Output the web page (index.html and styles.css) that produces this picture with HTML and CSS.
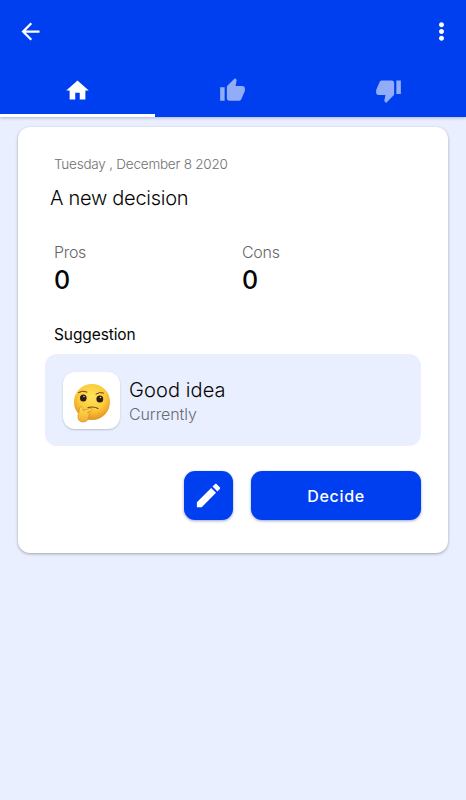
FILE: index.html
```html
<!DOCTYPE html>
<html lang="en">
<head>
<meta charset="utf-8">
<title>Decision</title>
<link rel="stylesheet" href="styles.css">
</head>
<body>
<header class="appbar">
  <div class="toolbar">
    <svg class="icon back" viewBox="0 0 24 24"><path d="M20 11H7.83l5.59-5.59L12 4l-8 8 8 8 1.41-1.41L7.83 13H20v-2z"/></svg>
    <svg class="icon more" viewBox="0 0 24 24"><path d="M12 8.200c1.200 0 2.200-1 2.200-2.200s-1-2.200-2.200-2.200S9.800 4.800 9.800 6s1 2.200 2.200 2.200zm0 1.600c-1.200 0-2.200 1-2.200 2.200s1 2.200 2.200 2.200 2.200-1 2.200-2.200-1-2.200-2.200-2.200zm0 6c-1.200 0-2.200 1-2.200 2.200s1 2.200 2.200 2.200 2.200-1 2.200-2.200-1-2.200-2.200-2.200z"/></svg>
  </div>
  <nav class="tabs">
    <div class="tab active"><svg class="icon" viewBox="0 0 24 24"><path d="M10 20v-6h4v6h5v-8h3L12 3 2 12h3v8z"/></svg></div>
    <div class="tab"><svg class="icon" viewBox="0 0 24 24"><path d="M1 21h4V9H1v12zm22-11c0-1.100-.9-2-2-2h-6.310l.95-4.570.03-.32c0-.41-.17-.79-.44-1.060L14.170 1 7.590 7.590C7.220 7.950 7 8.450 7 9v10c0 1.100.9 2 2 2h9c.83 0 1.540-.5 1.840-1.220l3.020-7.050c.09-.23.14-.47.14-.73v-2z"/></svg></div>
    <div class="tab"><svg class="icon" viewBox="0 0 24 24"><path d="M15 3H6c-.83 0-1.540.5-1.840 1.220l-3.020 7.050c-.09.23-.14.47-.14.73v2c0 1.100.9 2 2 2h6.310l-.95 4.570-.03.32c0 .41.17.79.44 1.060L9.830 23l6.590-6.590c.36-.36.58-.86.58-1.410V5c0-1.100-.9-2-2-2zm4 0v12h4V3h-4z"/></svg></div>
  </nav>
</header>
<main class="card">
  <p class="date">Tuesday , December 8 2020</p>
  <h1 class="title">A new decision</h1>
  <div class="counts">
    <div><p class="label">Pros</p><p class="value">0</p></div>
    <div><p class="label">Cons</p><p class="value">0</p></div>
  </div>
  <h2 class="heading">Suggestion</h2>
  <section class="suggestion">
    <div class="tile">
      <svg class="emoji" viewBox="0 0 38 40">
        <defs>
          <radialGradient id="face" cx=".5" cy=".35" r=".65"><stop offset="0" stop-color="#ffe45c"/><stop offset=".6" stop-color="#fcc93b"/><stop offset="1" stop-color="#e39421"/></radialGradient>
          <linearGradient id="hand" x1="0" y1="0" x2="0" y2="1"><stop offset="0" stop-color="#ffdd55"/><stop offset="1" stop-color="#f2ad30"/></linearGradient>
        </defs>
        <circle cx="19" cy="19" r="18" fill="url(#face)"/>
        <path d="M5.500 9.500q4-2.500 8.500-.5M23 11q3.500-2.500 7.500-1" fill="none" stroke="#65401b" stroke-width="1" stroke-linecap="round"/>
        <ellipse cx="10.300" cy="15" rx="3.300" ry="3.600" fill="#2c1c12"/>
        <ellipse cx="26.800" cy="16" rx="3.400" ry="3.600" fill="#2c1c12"/>
        <circle cx="11" cy="13.500" r=".8" fill="#d8c7ac"/><circle cx="27.500" cy="14.500" r=".8" fill="#d8c7ac"/>
        <path d="M15 24.500q6-1.500 10 1" fill="none" stroke="#744416" stroke-width="1.100" stroke-linecap="round"/>
        <path d="M7.500 24c1.500-.6 2.300.7 2.700 3.500l6.800-2.200c2-.5 2.700 1.500 1 2.400l-3.500 1.800c2.500 0 2.700 1.600 1.300 2.400.8 1 .3 2-.6 2.400.2 2.800-1.700 4.500-4.500 4.600-4 .2-5.800-1.900-5.700-5.700.1-2.500.7-3.200 1-4.800.2-1.400.3-3.900 1.500-4.400z" fill="url(#hand)" stroke="#d48a20" stroke-width=".7"/>
      </svg>
    </div>
    <div>
      <p class="verdict">Good idea</p>
      <p class="status">Currently</p>
    </div>
  </section>
  <div class="actions">
    <button class="edit" aria-label="Edit"><svg viewBox="0 0 24 24"><path d="M3 17.250V21h3.750L17.810 9.940l-3.750-3.750L3 17.250zM20.710 7.040c.39-.39.39-1.020 0-1.410l-2.340-2.340c-.39-.39-1.020-.39-1.410 0l-1.830 1.830 3.750 3.750 1.830-1.830z"/></svg></button>
    <button class="decide">Decide</button>
  </div>
</main>
</body>
</html>
```
FILE: styles.css
```css
* { box-sizing: border-box; margin: 0; }
body {
  min-height: 800px;
  background: #e9effe;
  font-family: Inter, "Liberation Sans", sans-serif;
  font-weight: 300;
  color: #050505;
}
svg { display: block; fill: #fff; }
p, h1, h2 { white-space: nowrap; }
.appbar {
  height: 117px;
  background: #003ff0;
  box-shadow: 0 1px 3px rgba(40, 50, 100, .3);
}
.toolbar {
  height: 62px;
  padding: 0 11px 0 17px;
  display: flex;
  align-items: center;
  justify-content: space-between;
}
.icon { width: 27px; height: 27px; }
.tabs { height: 55px; display: grid; grid-template-columns: repeat(3, 1fr); }
.tab { display: flex; justify-content: center; padding-top: 15px; }
.tab .icon { opacity: .57; }
.tab.active { border-bottom: 3px solid #fff; }
.tab.active .icon { opacity: 1; }
.card {
  margin: 10px 18px 0;
  height: 426px;
  padding: 27px 27px 0;
  border-radius: 12px;
  background: #fff;
  box-shadow: 0 1px 3px rgba(0, 0, 0, .32);
}
.date { padding-left: 9px; font-size: 13.5px; line-height: 20px; letter-spacing: -.22px; color: #6f6f6f; }
.title { margin-top: 11px; padding-left: 5px; font-size: 20px; line-height: 26px; font-weight: 300; letter-spacing: -.28px; }
.counts { margin-top: 31px; padding-left: 9px; display: grid; grid-template-columns: 188px 1fr; }
.label { font-size: 16px; line-height: 20px; letter-spacing: -.3px; color: #686868; }
.value { margin-top: 3px; font-size: 25px; line-height: 30px; font-weight: 500; }
.heading { margin-top: 30px; padding-left: 9px; font-size: 15.5px; line-height: 20px; font-weight: 400; letter-spacing: -.1px; }
.suggestion {
  margin-top: 9px;
  height: 92px;
  padding: 0 18px;
  display: flex;
  align-items: center;
  gap: 9px;
  border-radius: 12px;
  background: #e9effe;
}
.tile {
  width: 57px;
  height: 57px;
  padding-top: 5px;
  display: flex;
  align-items: center;
  justify-content: center;
  border-radius: 12px;
  background: #fff;
  box-shadow: 0 1px 2px rgba(0, 0, 0, .2);
}
.emoji { width: 38px; height: 40px; }
.verdict { padding-top: 2px; font-size: 20px; line-height: 26px; letter-spacing: .1px; }
.status { font-size: 16px; line-height: 22px; letter-spacing: -.1px; color: #686b75; }
.actions { margin-top: 25px; display: flex; justify-content: flex-end; gap: 18px; }
button {
  height: 49px;
  padding: 0;
  border: 0;
  border-radius: 11px;
  background: #003ff0;
  color: #fff;
  font: 500 16px Inter, sans-serif;
  box-shadow: 0 1px 3px rgba(0, 30, 120, .4);
}
.edit { width: 49px; display: grid; place-items: center; }
.edit svg { width: 31px; height: 31px; }
.decide { width: 170px; letter-spacing: .7px; }
```
